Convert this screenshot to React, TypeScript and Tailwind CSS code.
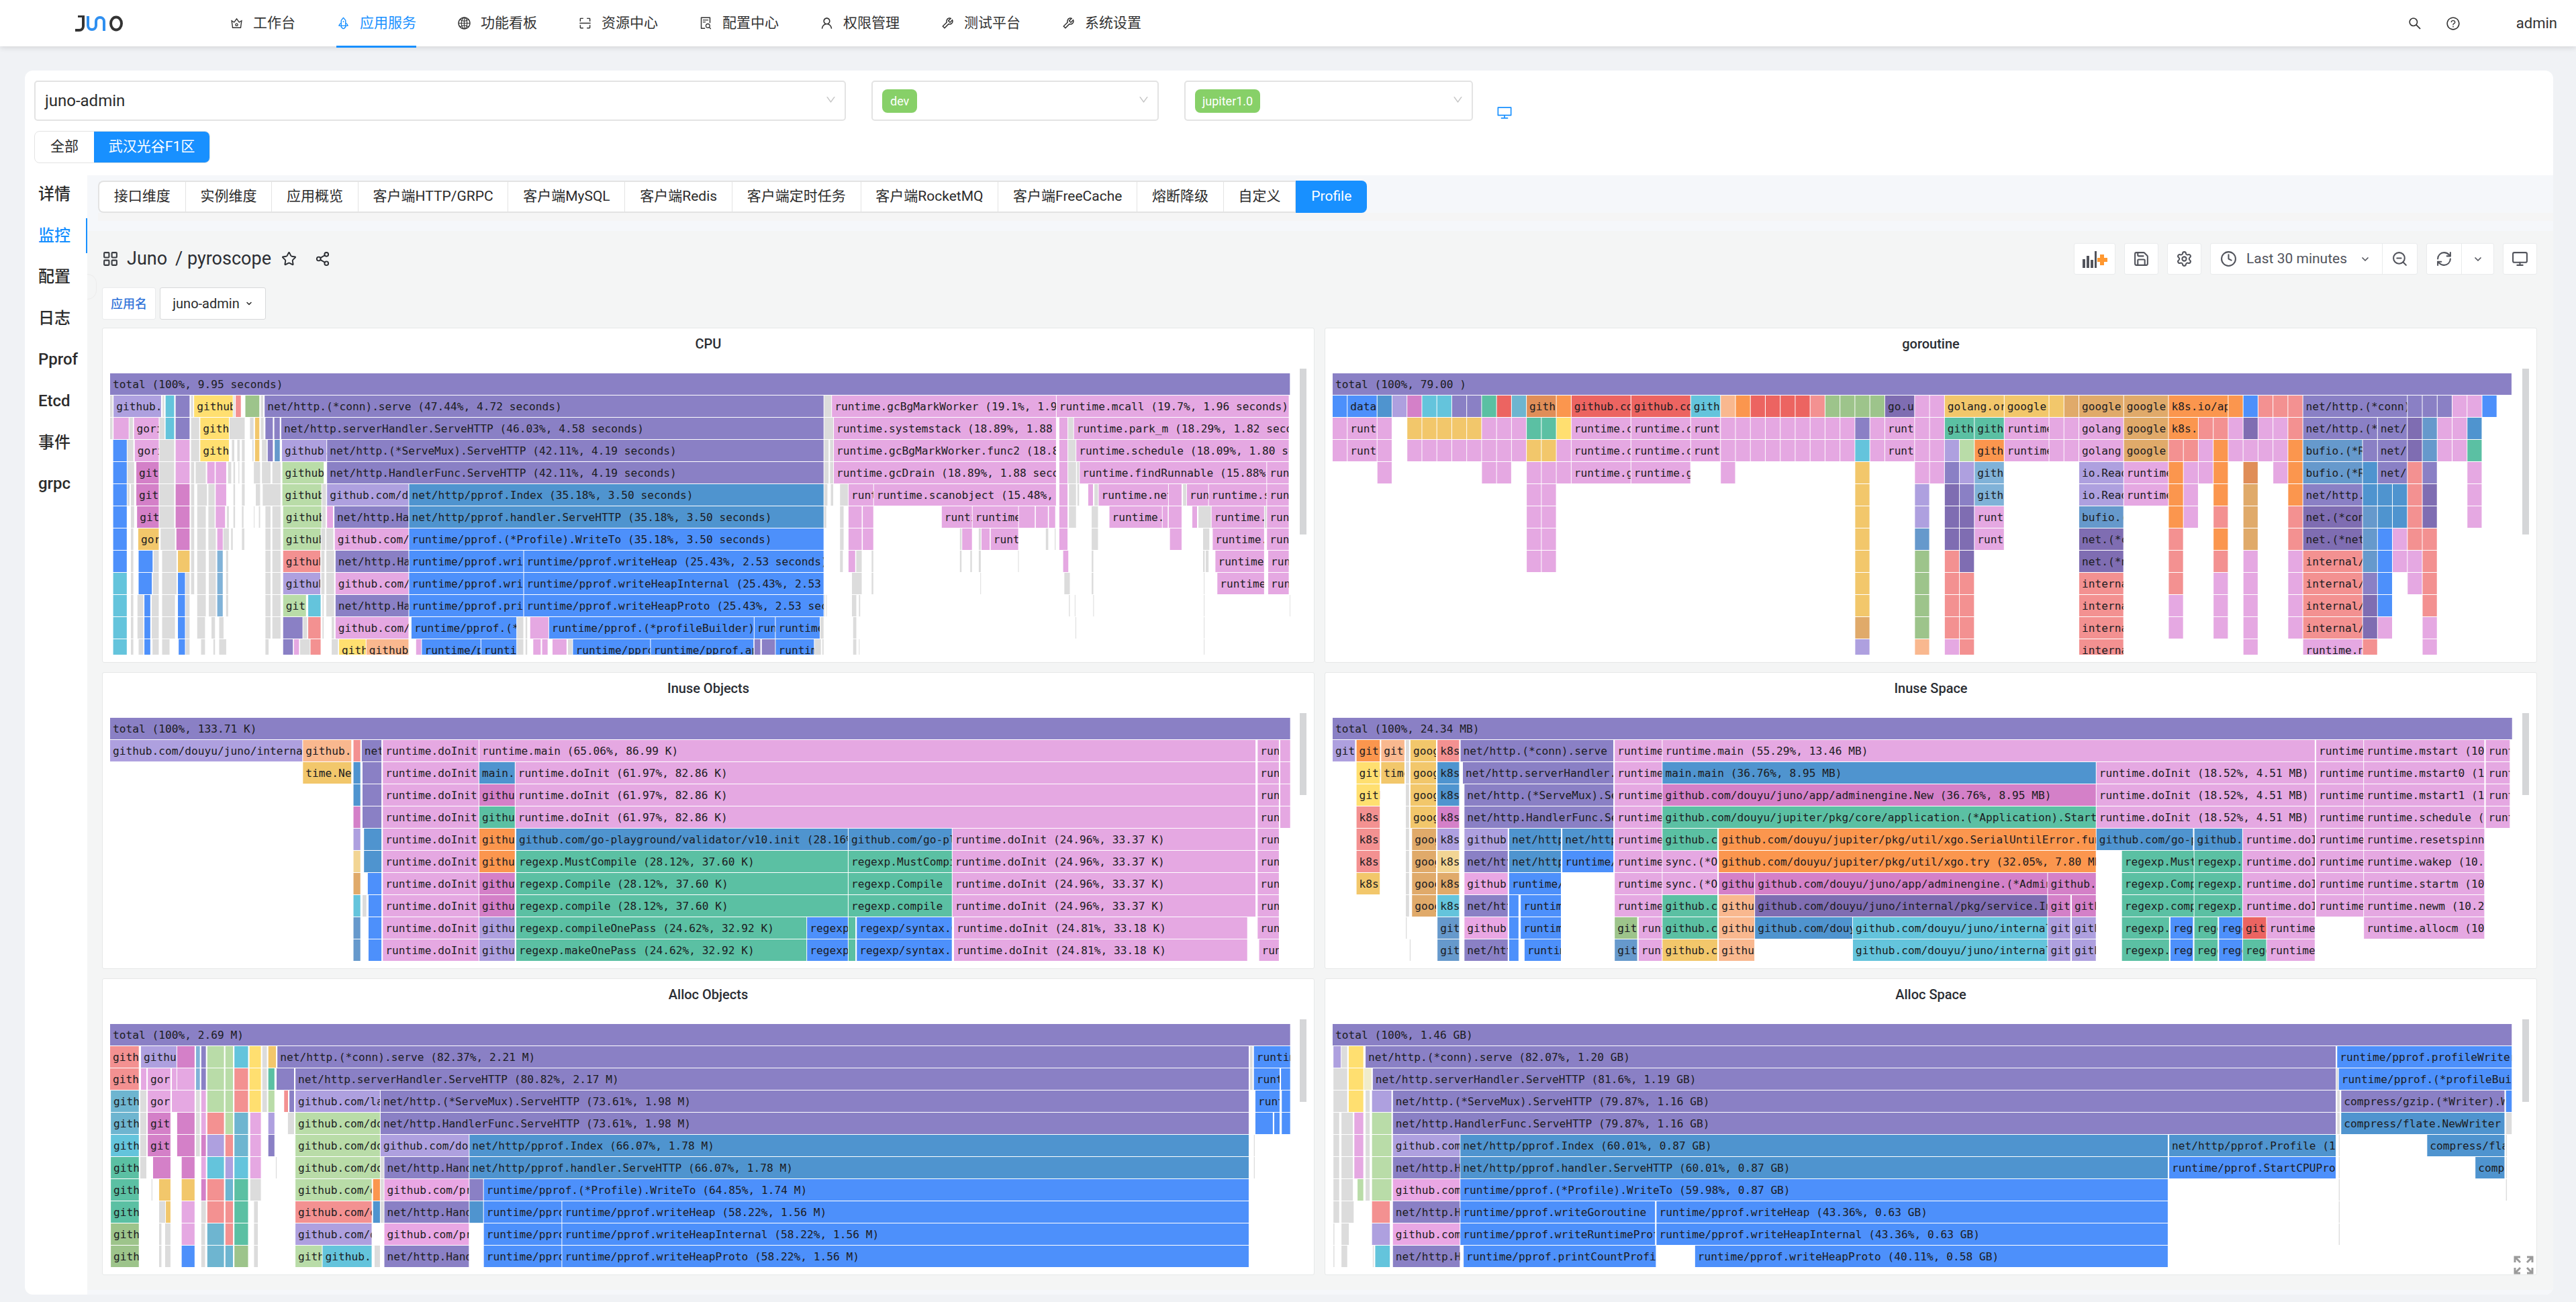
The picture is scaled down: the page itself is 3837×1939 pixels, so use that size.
import {
  AiOutlineCrown,
  AiOutlineDesktop,
  AiOutlineDown,
  AiOutlineFileSearch,
  AiOutlineGlobal,
  AiOutlineQuestionCircle,
  AiOutlineRocket,
  AiOutlineScan,
  AiOutlineSearch,
  AiOutlineTool,
  AiOutlineUser,
} from "react-icons/ai";
import { ChevronDown, Clock, LayoutGrid, Monitor, RefreshCw, Save, Settings, Share2, Star, ZoomOut } from "lucide-react";

const P = "#8a80c5";
const DP = "#7f6db2";
const L = "#aea0df";
const PK = "#e5a8e2";
const PK2 = "#e9a7e4";
const M = "#d480c8";
const B = "#4d90fb";
const S = "#4f94cf";
const S2 = "#6699cc";
const S3 = "#80b2d8";
const C = "#64c4dc";
const C2 = "#6eb5d0";
const T = "#5bc0a3";
const GN = "#9dc48b";
const LG = "#b9dca8";
const Y = "#ffdf70";
const A = "#f2c76b";
const A2 = "#f2d594";
const SD = "#e0aa6a";
const SO = "#e08e58";
const PE = "#f9b88f";
const O = "#fb964e";
const SA = "#f39191";
const R = "#ec6461";
const G = "#dcdcdc";

type Seg = [number, number, string, string?];

// grey slivers, given as start/end pairs
function gray(...xs: number[]): Seg[] {
  const out: Seg[] = [];
  for (let i = 0; i < xs.length; i += 2) out.push([xs[i], xs[i + 1], G]);
  return out;
}

const cpu: Seg[][] = [
  [[42, 3105, P, "total (100%, 9.95 seconds)"]],
  [...gray(42, 50, 178, 184, 252, 259, 362, 367, 433, 441, 1895, 1915), [51, 176, L, "github.com/gorilla"], [186, 210, C], [212, 250, P], [260, 362, Y, "github.com"], [368, 383, SA], [393, 431, GN], [443, 1895, P, "net/http.(*conn).serve (47.44%, 4.72 seconds)"], [1915, 2498, PK, "runtime.gcBgMarkWorker (19.1%, 1.90 seconds)"], [2498, 3102, PK, "runtime.mcall (19.7%, 1.96 seconds)"]],
  [...gray(42, 50, 92, 103, 170, 185, 252, 275, 352, 393, 405, 416, 433, 442, 1895, 1920, 2528, 2543), [51, 92, PK], [104, 170, PK, "gorilla"], [186, 210, C], [212, 250, P], [276, 352, Y, "github"], [418, 431, A], [445, 466, P], [468, 484, P], [486, 1895, P, "net/http.serverHandler.ServeHTTP (46.03%, 4.58 seconds)"], [1920, 2498, PK, "runtime.systemstack (18.89%, 1.88 seconds)"], [2505, 2528, PK], [2543, 3102, PK, "runtime.park_m (18.29%, 1.82 seconds)"]],
  [...gray(87, 104, 170, 210, 252, 275, 358, 366, 372, 380, 384, 393, 411, 416, 436, 450, 1895, 1908, 1910, 1920, 2528, 2549), [50, 87, B], [106, 170, PK, "gorilla"], [212, 250, PK], [276, 352, Y, "github"], [418, 431, A], [451, 466, P], [469, 484, S2], [488, 605, L, "github.com"], [605, 1895, P, "net/http.(*ServeMux).ServeHTTP (42.11%, 4.19 seconds)"], [1920, 2498, PK, "runtime.gcBgMarkWorker.func2 (18.89%, 1.88 seconds)"], [2505, 2528, PK], [2549, 3102, PK, "runtime.schedule (18.09%, 1.80 seconds)"]],
  [...gray(87, 106, 170, 210, 252, 262, 264, 292, 348, 358, 362, 368, 375, 379, 384, 393, 415, 433, 436, 460, 463, 486, 1895, 1908, 1910, 1920, 2528, 2550, 2551, 2558), [50, 87, B], [110, 170, M, "github"], [212, 250, PK], [294, 315, PK], [316, 345, PK], [489, 598, LG, "github.com"], [605, 1895, P, "net/http.HandlerFunc.ServeHTTP (42.11%, 4.19 seconds)"], [1920, 2498, PK, "runtime.gcDrain (18.89%, 1.88 seconds)"], [2505, 2528, PK], [2558, 3044, PK, "runtime.findRunnable (15.88%, 1.58 seconds)"], [3044, 3102, PK, "runtime"]],
  [...gray(87, 94, 96, 106, 170, 210, 252, 262, 268, 295, 297, 315, 362, 368, 384, 393, 420, 433, 438, 486, 592, 604, 1895, 1905, 1912, 1920, 1936, 1958, 2530, 2550, 2552, 2558, 2596, 2607, 2826, 2836), [50, 87, B], [110, 170, M, "github"], [212, 250, M], [316, 345, PK], [489, 592, LG, "github.com"], [605, 818, L, "github.com/douyu"], [818, 1895, S, "net/http/pprof.Index (35.18%, 3.50 seconds)"], [1958, 2024, PK, "runtime"], [2024, 2498, PK, "runtime.scanobject (15.48%, 1.54 seconds)"], [2505, 2528, PK], [2580, 2594, PK], [2607, 2789, PK, "runtime.netpoll"], [2789, 2824, PK], [2836, 2893, PK, "runtime"], [2893, 3044, PK, "runtime.stealWork"], [3044, 3102, PK, "runtime"]],
  [...gray(96, 106, 170, 210, 252, 262, 268, 292, 297, 315, 345, 352, 362, 368, 384, 390, 415, 418, 428, 433, 445, 460, 463, 486, 592, 603, 1895, 1902, 1936, 1947, 2530, 2550, 2589, 2607, 2866, 2900, 3038, 3044), [50, 87, B], [112, 170, M, "github"], [212, 250, M], [316, 342, PK], [491, 592, LG, "github.com"], [605, 622, PK], [624, 818, P, "net/http.HandlerFunc"], [818, 1895, S, "net/http/pprof.handler.ServeHTTP (35.18%, 3.50 seconds)"], [1958, 1994, PK], [1995, 2024, PK], [2200, 2280, PK, "runtime"], [2280, 2400, PK, "runtime.greyobject"], [2400, 2443, PK], [2444, 2477, PK], [2478, 2496, PK], [2505, 2528, PK], [2635, 2773, PK, "runtime.netpollblock"], [2773, 2788, PK], [2789, 2824, PK], [2850, 2864, PK], [2900, 3038, PK, "runtime.runqsteal"], [3044, 3102, PK, "runtime"]],
  [...gray(96, 104, 173, 212, 252, 262, 268, 292, 297, 318, 336, 352, 356, 362, 384, 392, 445, 460, 463, 486, 590, 602, 603, 623, 1936, 1947, 2247, 2253, 2296, 2303, 2470, 2478, 2493, 2497, 2589, 2607, 2878, 2896), [50, 87, B], [115, 170, A, "gorilla"], [214, 250, M], [320, 336, PK], [491, 590, LG, "github.com"], [625, 818, PK, "github.com/douyu"], [818, 1895, B, "runtime/pprof.(*Profile).WriteTo (35.18%, 3.50 seconds)"], [1958, 1994, PK], [1995, 2024, PK], [2253, 2280, PK], [2303, 2326, PK], [2327, 2400, PK, "runtime"], [2505, 2528, PK], [2792, 2824, PK], [2903, 3038, PK, "runtime.runqgrab"], [3044, 3102, PK, "runtime"]],
  [...gray(96, 104, 155, 170, 177, 216, 252, 262, 268, 292, 298, 318, 343, 350, 445, 460, 463, 486, 590, 600, 603, 625, 1936, 1945, 1978, 1994, 2018, 2024, 2247, 2253, 2274, 2280, 2296, 2303, 2398, 2400, 2589, 2595, 2878, 2884, 2885, 2894), [50, 87, B], [116, 154, B], [218, 250, A], [320, 336, S3], [491, 589, SA, "github.com"], [627, 818, P, "net/http.HandlerFunc"], [818, 1116, B, "runtime/pprof.writeGoroutine"], [1116, 1895, B, "runtime/pprof.writeHeap (25.43%, 2.53 seconds)"], [1958, 1977, PK], [2515, 2530, PK], [2910, 3038, PK, "runtime.procyield"], [3047, 3102, PK, "runtime"]],
  [...gray(96, 104, 153, 170, 177, 216, 238, 250, 252, 262, 268, 292, 298, 318, 343, 350, 445, 460, 463, 486, 590, 600, 603, 625, 1967, 1994, 2018, 2024, 2300, 2301, 2518, 2534, 2589, 2595, 2880, 2882), [50, 87, C], [116, 152, B], [218, 238, B], [320, 336, S3], [491, 589, L, "github.com"], [627, 818, PK, "github.com/douyu"], [818, 1116, B, "runtime/pprof.writeRuntimeProfile"], [1116, 1895, B, "runtime/pprof.writeHeapInternal (25.43%, 2.53 seconds)"], [2915, 3038, PK, "runtime.procyield"], [3047, 3102, PK, "runtime"]],
  [...gray(96, 104, 113, 130, 150, 170, 177, 212, 238, 250, 268, 292, 298, 318, 343, 350, 445, 460, 463, 486, 593, 598, 603, 625, 1895, 1898, 1900, 1903, 1967, 1980, 1985, 1990, 2530, 2534, 2545, 2548, 2593, 2595, 2880, 2882, 3103, 3105), [50, 87, C], [131, 148, B], [218, 238, B], [320, 336, S3], [491, 552, LG, "github"], [556, 590, C], [627, 818, P, "net/http.HandlerFunc"], [818, 1116, B, "runtime/pprof.printCountProfile"], [1116, 1895, B, "runtime/pprof.writeHeapProto (25.43%, 2.53 seconds)"]],
  [...gray(96, 104, 113, 130, 150, 170, 177, 212, 238, 250, 268, 290, 305, 316, 325, 338, 445, 460, 463, 486, 543, 555, 593, 598, 617, 625, 1098, 1116, 1120, 1126, 1885, 1895, 1970, 1980, 2547, 2549, 2880, 2882), [50, 87, C], [131, 148, B], [218, 238, B], [491, 543, P], [556, 590, SA], [627, 818, PK, "github.com/douyu"], [824, 1098, B, "runtime/pprof.(*profileBuilder)"], [1132, 1181, PK], [1181, 1714, B, "runtime/pprof.(*profileBuilder).addCPUData"], [1714, 1769, B, "runtime"], [1769, 1885, B, "runtime/pprof"]],
  [...gray(96, 104, 116, 130, 152, 170, 177, 198, 238, 250, 278, 290, 310, 316, 325, 345, 445, 455, 535, 562, 617, 635, 1098, 1116, 1120, 1126, 1230, 1243, 1870, 1888, 1890, 1895, 1970, 1980, 1985, 1988, 2880, 2882), [50, 87, C], [131, 148, B], [220, 238, B], [491, 518, P], [519, 534, PK], [562, 590, SA], [636, 707, Y, "github"], [707, 818, PE, "github.com"], [836, 851, PK], [851, 1005, B, "runtime/pprof"], [1005, 1098, B, "runtime/pp"], [1140, 1161, PK], [1163, 1179, PK], [1190, 1228, PK], [1243, 1445, B, "runtime/pprof.(*pro"], [1445, 1713, B, "runtime/pprof.appendLocs"], [1714, 1731, P], [1733, 1769, P], [1769, 1870, B, "runtime"]],
];

// goroutine stacks are whole counts: [first cell, cells, colour, label]
const goCells: [number, number, string, string?][][] = [
  [[0, 79, P, "total (100%, 79.00 )"]],
  [[0, 1, B], [1, 2, B, "database"], [3, 1, S], [4, 1, L], [5, 1, M], [6, 1, C], [7, 1, C], [8, 1, P], [9, 1, P], [10, 1, T], [11, 1, R], [12, 1, C2], [13, 2, SO, "github"], [15, 1, O], [16, 4, R, "github.com/douyu"], [20, 4, R, "github.com/douyu"], [24, 2, C, "github"], [26, 1, PE], [27, 1, O], [28, 1, R], [29, 1, R], [30, 1, R], [31, 1, R], [32, 1, SA], [33, 1, GN], [34, 1, GN], [35, 1, GN], [36, 1, GN], [37, 2, DP, "go.uber"], [39, 1, PK], [40, 1, PK], [41, 4, A, "golang.org/x"], [45, 3, A, "google.golang"], [48, 1, A], [49, 1, SD], [50, 3, SD, "google.golang"], [53, 3, SD, "google.golang"], [56, 4, O, "k8s.io/apimachinery"], [60, 1, O], [61, 1, B], [62, 1, SA], [63, 1, SA], [64, 1, SA], [65, 7, P, "net/http.(*conn).serve"], [72, 1, P], [73, 1, P], [74, 1, P], [75, 1, PK], [76, 1, PK], [77, 1, B]],
  [[0, 1, PK], [1, 2, PK, "runtime"], [3, 1, PK], [5, 1, A], [6, 1, A], [7, 1, A], [8, 1, A], [9, 1, A], [10, 1, PK], [11, 1, PK], [12, 1, PK], [13, 1, T], [14, 1, T], [15, 1, Y], [16, 4, PK, "runtime.chanrecv2"], [20, 4, PK, "runtime.chanrecv2"], [24, 2, PK, "runtime"], ...[26, 27, 28, 29, 30, 31, 32, 33, 34].map((i): [number, number, string] => [i, 1, PK]), [35, 1, P], [36, 1, PK], [37, 2, PK, "runtime"], [39, 1, PK], [40, 1, PK], [41, 2, T, "github"], [43, 2, T, "github"], [45, 3, PK, "runtime.gopark"], [48, 1, PK], [49, 1, PK], [50, 3, PK, "golang.org/x"], [53, 3, SD, "google.golang"], [56, 2, O, "k8s.io"], [58, 1, SA], [59, 1, SA], [60, 1, PK], [61, 1, DP], [62, 1, PK], [63, 1, PK], [64, 1, SA], [65, 5, P, "net/http.(*conn)"], [70, 2, P, "net/http"], [72, 1, DP], [73, 1, S2], [74, 1, PK], [75, 1, PK], [76, 1, S]],
  [[0, 1, PK], [1, 2, PK, "runtime"], [3, 1, PK], ...[5, 6, 7, 8, 9, 10, 11, 12].map((i): [number, number, string] => [i, 1, PK]), [13, 1, A], [14, 1, A], [15, 1, PK], [16, 4, PK, "runtime.chanrecv"], [20, 4, PK, "runtime.chanrecv"], [24, 2, PK, "runtime"], ...[26, 27, 28, 29, 30, 31, 32, 33, 34].map((i): [number, number, string] => [i, 1, PK]), [35, 1, C], [36, 1, PK], [37, 2, PK, "runtime"], [39, 1, PK], [40, 1, PK], [41, 1, L], [42, 1, LG], [43, 2, O, "github"], [45, 3, PK, "runtime.gopark"], [48, 1, PK], [49, 1, PK], [50, 3, PK, "golang.org/x"], [53, 3, SD, "google.golang"], [56, 1, SA], [57, 1, SA], [58, 1, PK], [59, 1, O], [60, 1, PK], [61, 1, PK], [62, 1, PK], [63, 1, PK], [64, 1, O], [65, 4, S2, "bufio.(*Reader)"], [69, 1, P], [70, 2, P, "net/http"], [72, 1, DP], [73, 1, S2], [74, 1, PK], [75, 1, PK], [76, 1, T]],
  [[3, 1, PK], [10, 1, PK], [11, 1, PK], [13, 1, PK], [14, 1, PK], [15, 1, PK], [16, 4, PK, "runtime.gopark"], [20, 4, PK, "runtime.gopark"], [26, 1, PK], [35, 1, A], [39, 1, PK], [40, 1, PK], [41, 1, P], [42, 1, L], [43, 2, S3, "github"], [50, 3, L, "io.ReadFull"], [53, 3, PK, "runtime.gopark"], [56, 1, O], [57, 1, PK], [58, 1, PK], [59, 1, O], [61, 1, SO], [63, 1, PK], [64, 1, O], [65, 4, S2, "bufio.(*Reader)"], [69, 1, S], [70, 2, P, "net/http"], [72, 1, SA], [73, 1, P], [76, 1, PK]],
  [[13, 1, PK], [14, 1, PK], [35, 1, A], [39, 1, L], [41, 1, DP], [42, 1, P], [43, 2, S3, "github"], [50, 3, L, "io.ReadFull"], [53, 3, PK, "runtime.gopark"], [56, 1, O], [57, 1, PK], [59, 1, O], [61, 1, SD], [64, 1, O], [65, 4, P, "net/http.(*conn)"], [69, 1, S], [70, 1, S], [71, 1, S], [72, 1, SA], [73, 1, DP], [76, 1, PK]],
  [[13, 1, PK], [14, 1, PK], [35, 1, A], [39, 1, L], [41, 1, DP], [42, 1, DP], [43, 2, PK, "runtime"], [50, 3, S2, "bufio.(*Reader)"], [56, 1, O], [57, 1, PK], [59, 1, SA], [61, 1, SD], [64, 1, SA], [65, 4, DP, "net.(*conn).Read"], [69, 1, S2], [70, 1, S], [71, 1, S], [72, 1, SA], [73, 1, DP], [76, 1, PK]],
  [[13, 1, PK], [14, 1, PK], [35, 1, A], [39, 1, S2], [41, 1, DP], [42, 1, DP], [43, 2, PK, "runtime"], [50, 3, DP, "net.(*conn)"], [56, 1, SA], [59, 1, O], [61, 1, SD], [64, 1, SA], [65, 4, DP, "net.(*netFD).Read"], [69, 1, S2], [70, 1, B], [71, 1, PK], [72, 1, SA], [73, 1, SA]],
  [[13, 1, PK], [14, 1, PK], [35, 1, A], [39, 1, GN], [41, 1, SA], [42, 1, DP], [50, 3, DP, "net.(*netFD)"], [56, 1, SA], [59, 1, SA], [61, 1, PK], [64, 1, PK], [65, 4, SA, "internal/poll"], [69, 1, S2], [70, 1, B], [71, 1, PK], [72, 1, PK], [73, 1, SA]],
  [[35, 1, A], [39, 1, GN], [41, 1, SA], [42, 1, SA], [50, 3, SA, "internal/poll"], [56, 1, SA], [59, 1, PK], [61, 1, PK], [64, 1, PK], [65, 4, SA, "internal/poll"], [69, 1, P], [70, 1, B], [72, 1, PK], [73, 1, SA]],
  [[35, 1, A], [39, 1, GN], [41, 1, SA], [42, 1, SA], [50, 3, SA, "internal/poll"], [56, 1, PK], [59, 1, PK], [61, 1, PK], [64, 1, PK], [65, 4, SA, "internal/poll"], [69, 1, DP], [70, 1, B], [73, 1, SA]],
  [[35, 1, SD], [39, 1, GN], [41, 1, SA], [42, 1, SA], [50, 3, SA, "internal/poll"], [56, 1, PK], [59, 1, PK], [61, 1, PK], [64, 1, PK], [65, 4, SA, "internal/poll"], [69, 1, DP], [70, 1, PK], [73, 1, PK]],
  [[35, 1, L], [39, 1, PE], [41, 1, PK], [42, 1, SA], [50, 3, SA, "internal/poll"], [61, 1, PK], [65, 4, PK, "runtime.netpollblock"], [69, 1, SA], [73, 1, PK]],
];
const goroutine: Seg[][] = goCells.map((row) => row.map(([i, n, c, t]): Seg => [i, i + n, c, t]));

const DOINIT = "runtime.doInit";
const initTail = (label: string): Seg[] => [[383, 511, PK, DOINIT], [1139, 1542, PK, label]];
const runEdge: Seg[] = [[1544, 1573, PK, "runtime"], [1574, 1588, PK]];
const runOnly: Seg[] = [[1544, 1573, PK, "runtime"]];

const inuseObjects: Seg[][] = [
  [[21, 1588, P, "total (100%, 133.71 K)"]],
  [[21, 277, L, "github.com/douyu/juno/internal/pkg"], [277, 342, PE, "github.com"], [344, 354, SA], [355, 382, P, "net/http"], [383, 511, PK, DOINIT], [511, 1542, PK, "runtime.main (65.06%, 86.99 K)"], ...runEdge],
  [[277, 342, A, "time.NewTimer"], [344, 354, S], [356, 382, P], [383, 511, PK, DOINIT], [511, 559, S, "main.main"], [559, 1542, PK, "runtime.doInit (61.97%, 82.86 K)"], ...runEdge],
  [[344, 354, S], [356, 382, P], [383, 511, PK, DOINIT], [511, 559, M, "github.com"], [559, 1542, PK, "runtime.doInit (61.97%, 82.86 K)"], ...runEdge],
  [[344, 354, M], [356, 382, P], [383, 511, PK, DOINIT], [511, 559, T, "github.com"], [559, 1542, PK, "runtime.doInit (61.97%, 82.86 K)"], ...runEdge],
  [[344, 354, L], [358, 382, S], ...initTail("runtime.doInit (24.96%, 33.37 K)"), [511, 559, O, "github.com"], [560, 1001, S, "github.com/go-playground/validator/v10.init (28.16%, 37.65 K)"], [1001, 1139, S, "github.com/go-playground"], ...runOnly],
  [[344, 354, A2], [358, 382, S], ...initTail("runtime.doInit (24.96%, 33.37 K)"), [511, 559, O, "github.com"], [560, 1001, T, "regexp.MustCompile (28.12%, 37.60 K)"], [1001, 1139, T, "regexp.MustCompile (3"], ...runOnly],
  [[344, 354, SD], [363, 382, B], ...initTail("runtime.doInit (24.96%, 33.37 K)"), [511, 559, M, "github.com"], [560, 1001, T, "regexp.Compile (28.12%, 37.60 K)"], [1001, 1139, T, "regexp.Compile"], ...runOnly],
  [[344, 354, C], [356, 362, G], [364, 382, B], ...initTail("runtime.doInit (24.96%, 33.37 K)"), [511, 559, M, "github.com"], [560, 1001, T, "regexp.compile (28.12%, 37.60 K)"], [1001, 1139, T, "regexp.compile"], ...runOnly],
  [[344, 354, S2], [364, 382, B], [383, 511, PK, DOINIT], [511, 559, L, "github.com"], [560, 946, T, "regexp.compileOnePass (24.62%, 32.92 K)"], [946, 1001, B, "regexp/syntax"], [1001, 1011, T], [1012, 1139, B, "regexp/syntax.Compile"], [1141, 1531, PK, "runtime.doInit (24.81%, 33.18 K)"], ...runOnly],
  [[344, 354, S2], [364, 382, B], [383, 511, PK, DOINIT], [511, 559, L, "github.com"], [560, 946, T, "regexp.makeOnePass (24.62%, 32.92 K)"], [946, 1001, B, "regexp/syntax"], [1001, 1011, T], [1012, 1139, B, "regexp/syntax.Parse"], [1141, 1531, PK, "runtime.doInit (24.81%, 33.18 K)"], [1546, 1573, PK, "runtime"]],
];

const RT: Seg = [388, 450, PK, "runtime.main"];
const RT2: Seg = [1298, 1360, PK, "runtime.mcall"];
const DOI: Seg = [1203, 1297, PK, "runtime.doInit"];
const inuseSpace: Seg[][] = [
  [[22, 1553, P, "total (100%, 24.34 MB)"]],
  [[22, 52, L, "github"], [53, 84, O, "github"], [85, 116, PE, "github"], [117, 122, G], [123, 157, A, "google"], [158, 187, SA, "k8s.io"], [188, 387, P, "net/http.(*conn).serve (32%)"], RT, [450, 1297, PK, "runtime.main (55.29%, 13.46 MB)"], RT2, [1360, 1517, PK, "runtime.mstart (10.25%, 2.50 MB)"], [1518, 1550, PK, "runtime"]],
  [[53, 84, Y, "github"], [85, 116, A, "time.Now"], [117, 122, G], [123, 157, A, "google"], [158, 187, S, "k8s.io"], [191, 387, P, "net/http.serverHandler.ServeHTTP"], RT, [450, 1013, S, "main.main (36.76%, 8.95 MB)"], [1013, 1297, PK, "runtime.doInit (18.52%, 4.51 MB)"], RT2, [1360, 1517, PK, "runtime.mstart0 (10.25%, 2.50 MB)"], [1518, 1550, PK, "runtime"]],
  [[53, 84, Y, "github"], [117, 122, G], [123, 157, A, "google"], [158, 187, S, "k8s.io"], [193, 387, P, "net/http.(*ServeMux).ServeHTTP"], RT, [450, 1013, M, "github.com/douyu/juno/app/adminengine.New (36.76%, 8.95 MB)"], [1013, 1297, PK, "runtime.doInit (18.52%, 4.51 MB)"], RT2, [1360, 1517, PK, "runtime.mstart1 (10.25%, 2.50 MB)"], [1518, 1550, PK, "runtime"]],
  [[53, 84, SA, "k8s.io"], [117, 122, G], [123, 157, A, "google"], [158, 187, M, "k8s.io"], [193, 387, P, "net/http.HandlerFunc.ServeHTTP"], RT, [450, 1013, T, "github.com/douyu/jupiter/pkg/core/application.(*Application).Start"], [1013, 1297, PK, "runtime.doInit (18.52%, 4.51 MB)"], RT2, [1360, 1517, PK, "runtime.schedule (10.25%, 2.50 MB)"], [1518, 1550, PK, "runtime"]],
  [[53, 84, SA, "k8s.io"], [117, 122, G], [125, 157, SD, "google"], [158, 187, L, "k8s.io"], [193, 250, L, "github.com"], [251, 319, S, "net/http.H"], [320, 387, S, "net/http.H"], RT, [450, 522, T, "github.com"], [523, 1013, O, "github.com/douyu/jupiter/pkg/util/xgo.SerialUntilError.func1"], [1013, 1139, S, "github.com/go-playground"], [1140, 1203, S, "github.com"], DOI, RT2, [1360, 1517, PK, "runtime.resetspinning (10.25%)"]],
  [[53, 84, SA, "k8s.io"], [117, 122, G], [125, 157, SD, "google"], [158, 187, A2, "k8s.io"], [193, 250, P, "net/http"], [251, 319, S, "net/http.H"], [320, 387, B, "runtime/pprof"], RT, [450, 522, PK, "sync.(*Once)"], [523, 1013, O, "github.com/douyu/jupiter/pkg/util/xgo.try (32.05%, 7.80 MB)"], [1046, 1140, T, "regexp.MustCompile"], [1140, 1203, T, "regexp.Must"], DOI, RT2, [1360, 1517, PK, "runtime.wakep (10.25%, 2.50 MB)"]],
  [[53, 84, A, "k8s.io"], [117, 122, G], [125, 157, SD, "google"], [158, 187, SD, "k8s.io"], [193, 250, PK2, "github.com"], [251, 319, B, "runtime/pprof"], RT, [450, 522, PK, "sync.(*Once)"], [523, 570, M, "github.com"], [570, 950, M, "github.com/douyu/juno/app/adminengine.(*Admin).initX"], [950, 1013, M, "github.com"], [1046, 1140, T, "regexp.Compile"], [1140, 1203, T, "regexp.Comp"], DOI, RT2, [1360, 1517, PK, "runtime.startm (10.25%, 2.50 MB)"]],
  [[117, 122, G], [125, 157, SD, "google"], [158, 187, C, "k8s.io"], [193, 250, P, "net/http"], [251, 264, B], [266, 319, B, "runtime/pprof"], RT, [450, 522, T, "github.com"], [523, 570, PE, "github.com"], [570, 950, DP, "github.com/douyu/juno/internal/pkg/service.Init"], [950, 980, M, "github"], [981, 1013, M, "github"], [1046, 1140, T, "regexp.compile"], [1140, 1203, T, "regexp.comp"], DOI, RT2, [1360, 1517, PK, "runtime.newm (10.25%, 2.50 MB)"]],
  [[117, 119, G], [158, 187, S2, "github"], [193, 250, PK2, "github.com"], [251, 264, B], [266, 319, B, "runtime/pprof"], [388, 418, GN, "github"], [419, 450, PK, "runtime"], [450, 522, T, "github.com"], [523, 570, PE, "github.com"], [570, 697, S, "github.com/douyu/juno"], [697, 950, C, "github.com/douyu/juno/internal/pkg"], [950, 980, L, "github"], [981, 1013, L, "github"], [1046, 1108, T, "regexp.comp"], [1109, 1139, B, "regexp"], [1140, 1171, T, "regexp"], [1172, 1203, B, "regexp"], [1203, 1234, R, "github"], [1234, 1297, PK, "runtime.new"], [1360, 1517, PK, "runtime.allocm (10.25%, 2.50 MB)"]],
  [[122, 124, G], [158, 187, S2, "github"], [193, 250, P, "net/http"], [251, 264, B], [271, 319, B, "runtime/pprof"], [388, 418, S2, "github"], [419, 450, PK, "runtime"], [450, 522, A, "github.com"], [523, 570, PE, "github.com"], [697, 950, C, "github.com/douyu/juno/internal/pkg"], [950, 980, L, "github"], [981, 1013, L, "github"], [1046, 1108, T, "regexp.make"], [1109, 1139, B, "regexp"], [1140, 1171, T, "regexp"], [1172, 1203, B, "regexp"], [1203, 1234, T, "regexp"], [1234, 1297, PK, "runtime.mal"]],
];

const allocObjects: Seg[][] = [
  [[21, 1588, P, "total (100%, 2.69 M)"]],
  [[21, 60, SA, "github"], [62, 110, L, "github.com"], [110, 134, M], [135, 141, S3], [142, 149, P], [150, 173, LG], [174, 185, LG], [186, 205, C], [206, 222, Y], [223, 230, G], [231, 242, A], [243, 1533, P, "net/http.(*conn).serve (82.37%, 2.21 M)"], [1534, 1538, G], [1539, 1588, B, "runtime/pprof"]],
  [[21, 60, SA, "github"], [62, 70, PK], [71, 102, PK, "gorilla"], [103, 110, PK], [110, 134, PK], [135, 141, S3], [142, 149, P], [150, 173, LG], [174, 185, LG], [186, 205, SA], [206, 222, Y], [223, 230, G], [231, 240, T], [242, 266, P], [267, 1533, P, "net/http.serverHandler.ServeHTTP (80.82%, 2.17 M)"], [1534, 1538, G], [1539, 1574, B, "runtime/pprof"], [1575, 1588, B]],
  [[22, 60, C2, "github"], [61, 70, G], [71, 102, PK, "gorilla"], [103, 134, PK], [135, 141, G], [142, 149, PK], [150, 173, LG], [174, 185, LG], [186, 205, SA], [206, 222, Y], [223, 230, G], [231, 240, LG], [252, 258, SA], [259, 266, P], [267, 380, L, "github.com/labstack"], [380, 1533, P, "net/http.(*ServeMux).ServeHTTP (73.61%, 1.98 M)"], [1541, 1574, B, "runtime/pprof"], [1576, 1588, B]],
  [[22, 60, C2, "github"], [61, 70, G], [71, 102, M, "github"], [110, 134, M], [135, 141, G], [142, 149, PK], [150, 173, SA], [174, 185, LG], [186, 205, C2], [207, 222, PK], [231, 240, L], [257, 266, G], [267, 380, LG, "github.com/douyu"], [380, 1533, P, "net/http.HandlerFunc.ServeHTTP (73.61%, 1.98 M)"], [1541, 1565, B], [1566, 1574, B], [1576, 1588, B]],
  [[22, 60, C, "github"], [61, 70, G], [71, 102, M, "github"], [110, 134, M], [135, 141, G], [142, 149, M], [150, 173, L], [174, 185, SA], [186, 205, C2], [207, 222, PK], [231, 240, P], [267, 380, LG, "github.com/douyu"], [380, 498, L, "github.com/douyu"], [498, 1533, S, "net/http/pprof.Index (66.07%, 1.78 M)"], [1539, 1541, G]],
  [[22, 60, T, "github"], [61, 70, G], [78, 102, M], [116, 134, M], [142, 149, PK], [150, 173, C], [174, 185, L], [186, 205, C], [207, 222, PK], [241, 243, G], [267, 380, LG, "github.com/douyu"], [380, 385, G], [385, 498, P, "net/http.HandlerFunc"], [498, 1533, S, "net/http/pprof.handler.ServeHTTP (66.07%, 1.78 M)"], [1539, 1541, G]],
  [[22, 60, T, "github"], [76, 78, G], [86, 102, A], [116, 134, A], [142, 149, M], [150, 173, SA], [174, 185, C2], [186, 205, T], [207, 222, G], [267, 369, LG, "github.com/douyu"], [370, 380, O], [380, 385, G], [385, 498, PK2, "github.com/prometheus"], [498, 517, P], [517, 1533, B, "runtime/pprof.(*Profile).WriteTo (64.85%, 1.74 M)"]],
  [[22, 60, T, "github"], [86, 95, G], [95, 102, A], [116, 134, PK], [142, 149, G], [150, 173, SA], [174, 185, SA], [186, 205, T], [212, 218, G], [267, 369, SA, "github.com/douyu"], [370, 380, S], [380, 385, G], [385, 498, P, "net/http.HandlerFunc"], [498, 517, S], [517, 621, B, "runtime/pprof.write"], [621, 1533, B, "runtime/pprof.writeHeap (58.22%, 1.56 M)"]],
  [[22, 60, GN, "github"], [86, 90, G], [94, 102, G], [116, 134, PK], [142, 148, G], [150, 173, C2], [174, 185, SA], [186, 205, T], [212, 218, G], [267, 369, L, "github.com/douyu"], [385, 498, PK2, "github.com/prometheus"], [517, 621, B, "runtime/pprof.write"], [621, 1533, B, "runtime/pprof.writeHeapInternal (58.22%, 1.56 M)"]],
  [[22, 60, GN, "github"], [86, 90, G], [94, 102, G], [116, 134, B], [142, 148, G], [150, 173, C2], [174, 185, C2], [186, 205, GN], [212, 218, G], [267, 303, LG, "github"], [303, 369, C, "github.com"], [372, 380, G], [385, 498, P, "net/http.HandlerFunc"], [517, 621, B, "runtime/pprof.print"], [621, 1533, B, "runtime/pprof.writeHeapProto (58.22%, 1.56 M)"]],
];

const allocSpace: Seg[][] = [
  [[21, 1489, P, "total (100%, 1.46 GB)"]],
  [[22, 32, L], [32, 40, G], [41, 60, Y], [62, 1270, P, "net/http.(*conn).serve (82.07%, 1.20 GB)"], [1271, 1489, B, "runtime/pprof.profileWriter (17%)"]],
  [[22, 40, G], [41, 60, Y], [60, 70, "#f0eccb"], [71, 1270, P, "net/http.serverHandler.ServeHTTP (81.6%, 1.19 GB)"], [1270, 1273, G], [1273, 1489, B, "runtime/pprof.(*profileBuilder).build"]],
  [[22, 40, G], [41, 60, Y], [62, 68, G], [70, 95, L], [96, 1270, P, "net/http.(*ServeMux).ServeHTTP (79.87%, 1.16 GB)"], [1271, 1275, G], [1276, 1480, P, "compress/gzip.(*Writer).Write"], [1481, 1489, B]],
  [[22, 30, G], [32, 47, G], [48, 60, PK], [62, 68, G], [70, 95, LG], [96, 1270, P, "net/http.HandlerFunc.ServeHTTP (79.87%, 1.16 GB)"], [1271, 1275, G], [1276, 1480, S, "compress/flate.NewWriter (14%)"], [1481, 1489, G]],
  [[22, 30, G], [32, 47, G], [48, 60, PK], [62, 68, G], [70, 95, LG], [96, 180, L, "github.com/douyu"], [180, 1061, S, "net/http/pprof.Index (60.01%, 0.87 GB)"], [1062, 1270, S, "net/http/pprof.Profile (19.86%, 0.29 GB)"], [1273, 1275, G], [1383, 1480, S, "compress/flate.(*c"], [1481, 1483, G]],
  [[22, 30, G], [32, 47, G], [48, 60, PK], [62, 68, G], [70, 95, LG], [96, 180, P, "net/http.HandlerFunc"], [180, 1061, S, "net/http/pprof.handler.ServeHTTP (60.01%, 0.87 GB)"], [1062, 1270, B, "runtime/pprof.StartCPUProfile"], [1273, 1275, G], [1443, 1480, S, "compress"], [1481, 1483, G]],
  [[22, 30, G], [32, 47, G], [52, 60, LG], [62, 68, G], [70, 95, LG], [96, 180, PK2, "github.com/douyu"], [180, 1061, B, "runtime/pprof.(*Profile).WriteTo (59.98%, 0.87 GB)"], [1273, 1275, G], [1481, 1483, G]],
  [[22, 30, G], [32, 48, G], [70, 93, SA], [96, 180, P, "net/http.HandlerFunc"], [180, 423, B, "runtime/pprof.writeGoroutine"], [424, 1061, B, "runtime/pprof.writeHeap (43.36%, 0.63 GB)"], [1273, 1275, G]],
  [[22, 24, G], [32, 42, G], [70, 93, L], [96, 180, PK2, "github.com/douyu"], [180, 423, B, "runtime/pprof.writeRuntimeProfile"], [424, 1061, B, "runtime/pprof.writeHeapInternal (43.36%, 0.63 GB)"], [1273, 1275, G]],
  [[22, 24, G], [32, 40, G], [71, 73, G], [74, 93, C], [96, 180, P, "net/http.HandlerFunc"], [184, 424, B, "runtime/pprof.printCountProfile"], [472, 1061, B, "runtime/pprof.writeHeapProto (40.11%, 0.58 GB)"]],
];

function Flame({ rows, origin, scale, height }: { rows: Seg[][]; origin: number; scale: number; height: number }) {
  return (
    <svg width={1758} height={height} className="block ml-[11px] [font-family:'DejaVu_Sans_Mono',monospace] text-[16.2px]">
      {rows.map((row, r) =>
        row.map(([a, b, color, label], i) => {
          const x = (a - origin) / scale;
          const w = Math.max((b - a) / scale - 1, 1);
          return (
            <g key={`${r}-${i}`}>
              <rect x={x} y={r * 33} width={w} height={32} fill={color} />
              {label && (
                <svg x={x} y={r * 33} width={w} height={32}>
                  <text x={4} y={22} fill="#1c1c22">
                    {label}
                  </text>
                </svg>
              )}
            </g>
          );
        })
      )}
    </svg>
  );
}

function Panel({ title, children, thumb, className }: { title: string; children: React.ReactNode; thumb: number; className: string }) {
  return (
    <div className={`relative rounded-[3px] border border-[#e6e8e8] bg-white ${className}`}>
      <div className="h-[47px] text-center text-[20px] leading-[47px] font-medium text-[#2a2d33]">{title}</div>
      <div className="mt-[20px]">{children}</div>
      <div className="absolute left-[1783px] top-[60px] w-[10px] bg-[#d5d6d8]" style={{ height: thumb }} />
    </div>
  );
}

function ToolBtn({ children, className = "w-[51px]" }: { children: React.ReactNode; className?: string }) {
  return (
    <div className={`flex h-[47px] items-center justify-center rounded-[3px] border border-[#e9ebec] bg-white text-[#52545c] ${className}`}>
      {children}
    </div>
  );
}

const navItems = [
  { icon: AiOutlineCrown, label: "工作台" },
  { icon: AiOutlineRocket, label: "应用服务", active: true },
  { icon: AiOutlineGlobal, label: "功能看板" },
  { icon: AiOutlineScan, label: "资源中心" },
  { icon: AiOutlineFileSearch, label: "配置中心" },
  { icon: AiOutlineUser, label: "权限管理" },
  { icon: AiOutlineTool, label: "测试平台" },
  { icon: AiOutlineTool, label: "系统设置" },
];

const tabs = ["接口维度", "实例维度", "应用概览", "客户端HTTP/GRPC", "客户端MySQL", "客户端Redis", "客户端定时任务", "客户端RocketMQ", "客户端FreeCache", "熔断降级", "自定义"];
const sideItems = ["详情", "监控", "配置", "日志", "Pprof", "Etcd", "事件", "grpc"];

function Select({ className, children }: { className: string; children: React.ReactNode }) {
  return (
    <div className={`relative flex h-[60px] items-center rounded-[5px] border-2 border-[#e3e3e3] px-[14px] ${className}`}>
      {children}
      <AiOutlineDown className="absolute right-[12px] top-[18px] text-[17px] text-[#c4c4c4]" />
    </div>
  );
}

export default function App() {
  return (
    <div className="min-h-[1939px] w-[3837px] bg-[#f0f2f5] [font-family:Roboto,'Noto_Sans_CJK_SC',sans-serif] text-[#2b2b2b]">
      <header className="relative flex h-[69px] items-center bg-white pl-[110px] shadow-[0_2px_8px_rgba(0,0,0,0.12)]">
        <svg width="76" height="24" viewBox="0 0 76 24" fill="none" className="mr-[156px]">
          <path d="M6 1h8v15a6 6 0 0 1-6 6H2" stroke="#333" strokeWidth="4" />
          <path d="M21 1v14a6 6 0 0 0 12 0V9a6 6 0 0 1 12 0v14" stroke="#2f8ff0" strokeWidth="4" />
          <ellipse cx="63" cy="12" rx="8" ry="9.5" stroke="#333" strokeWidth="4" />
        </svg>
        <nav className="flex h-full gap-[61px]">
          {navItems.map((n) => (
            <div
              key={n.label}
              className={`relative flex h-full items-center gap-[14px] text-[21px] ${n.active ? "text-[#1890ff]" : "text-[#333]"}`}
            >
              <n.icon className="text-[21px]" />
              {n.label}
              {n.active && <span className="absolute bottom-[-2px] left-0 h-[3px] w-full bg-[#1890ff]" />}
            </div>
          ))}
        </nav>
        <div className="ml-auto flex items-center pr-[28px] text-[#333]">
          <AiOutlineSearch className="mr-[35px] text-[22px]" />
          <AiOutlineQuestionCircle className="mr-[83px] text-[22px]" />
          <span className="text-[22px]">admin</span>
        </div>
      </header>

      <main className="ml-[37px] mr-[34px] mt-[36px] flex h-[1823px] flex-col overflow-hidden rounded-[12px] bg-white">
        <div className="flex gap-[38px] px-[14px] pt-[15px]">
          <Select className="w-[1209px] text-[24px]">juno-admin</Select>
          <Select className="w-[428px]">
            <span className="rounded-[8px] bg-[#87d068] px-[12px] py-[4px] text-[18px] text-white">dev</span>
          </Select>
          <Select className="w-[430px]">
            <span className="rounded-[8px] bg-[#87d068] px-[11px] py-[4px] text-[18px] text-white">jupiter1.0</span>
          </Select>
          <AiOutlineDesktop className="-ml-[3px] mt-[36px] text-[24px] text-[#1890ff]" />
        </div>
        <div className="mx-[14px] mt-[15px] flex h-[48px] w-[262px] overflow-hidden rounded-[8px] border border-[#e3e3e3] text-[21px]">
          <div className="flex w-[88px] items-center justify-center">全部</div>
          <div className="flex flex-1 items-center justify-center bg-[#1890ff] text-white">武汉光谷F1区</div>
        </div>

        <div className="mt-[18px] flex min-h-0 flex-1">
          <aside className="relative w-[93px] shrink-0 pt-[2px]">
            {sideItems.map((s) => (
              <div
                key={s}
                className={`mb-[9.6px] flex h-[52px] items-center pl-[20px] text-[24px] font-medium ${s === "监控" ? "border-r-2 border-[#1890ff] text-[#1890ff]" : ""}`}
              >
                {s}
              </div>
            ))}
            <div className="absolute right-[-14px] top-[147px] h-[38px] w-[14px] rounded-r-full border border-l-0 border-[#ececec]" />
          </aside>

          <section className="flex min-w-0 flex-1 flex-col bg-[#f5f7fa] pt-[8px]">
            <div className="ml-[16px] flex h-[48px] items-stretch text-[21px]">
              <div className="flex overflow-hidden rounded-l-[8px] border-2 border-r-0 border-[#e3e3e3] bg-white">
                {tabs.map((t) => (
                  <div key={t} className="flex items-center border-r border-[#e3e3e3] px-[21.8px] whitespace-nowrap">
                    {t}
                  </div>
                ))}
              </div>
              <div className="flex w-[106px] items-center justify-center rounded-r-[8px] bg-[#1890ff] text-white">Profile</div>
            </div>
            <div className="ml-[16px] h-[12px] shrink-0 bg-[#f5f5f5]" />
            <div className="mt-[15px] flex-1 bg-[#f4f5f5] pl-[22px] pr-[24px] pt-[18px]">
              <div className="flex h-[47px] items-center">
                <LayoutGrid size={25} strokeWidth={2} className="text-[#3a3d42]" />
                <span className="ml-[12px] text-[27px] text-[#2b2e33]">Juno</span>
                <span className="ml-[12px] text-[27px] text-[#2b2e33]">/ pyroscope</span>
                <Star size={23} className="ml-[15px] text-[#2b2e33]" />
                <Share2 size={23} className="ml-[27px] text-[#2b2e33]" />
                <div className="ml-auto flex items-center gap-[13px]">
                  <ToolBtn className="w-[62px]">
                    <svg width="38" height="26" viewBox="0 0 38 26">
                      <path d="M1 13h4v13H1zM7 8h4v18H7zM13 14h4v12h-4zM19 1h3v25h-3z" fill="#52545c" />
                      <path d="M27 6h6v5h5v6h-5v5h-6v-5h-4v-6h4z" fill="#ff9830" />
                    </svg>
                  </ToolBtn>
                  <ToolBtn><Save size={25} /></ToolBtn>
                  <ToolBtn><Settings size={25} /></ToolBtn>
                  <div className="flex h-[47px] w-[309px] items-center rounded-[3px] border border-[#e9ebec] bg-white text-[#52545c]">
                    <Clock size={25} className="ml-[14px]" />
                    <span className="ml-[14px] text-[21px]">Last 30 minutes</span>
                    <ChevronDown size={16} strokeWidth={2.5} className="ml-[19px]" />
                    <span className="ml-auto flex h-full w-[52px] items-center justify-center border-l border-[#e9ebec]">
                      <ZoomOut size={25} />
                    </span>
                  </div>
                  <div className="flex h-[47px] w-[101px] items-center rounded-[3px] border border-[#e9ebec] bg-white text-[#52545c]">
                    <span className="flex h-full w-[52px] items-center justify-center border-r border-[#e9ebec]"><RefreshCw size={25} /></span>
                    <span className="flex flex-1 justify-center"><ChevronDown size={16} strokeWidth={2.5} /></span>
                  </div>
                  <ToolBtn><Monitor size={25} /></ToolBtn>
                </div>
              </div>

              <div className="mt-[19px] flex h-[48px] gap-[6px]">
                <div className="flex w-[80px] items-center justify-center rounded-[3px] border border-[#e9ebec] bg-white text-[18px] font-medium text-[#3274d9]">应用名</div>
                <div className="flex w-[158px] items-center justify-center gap-[8px] rounded-[3px] border border-[#d8d9da] bg-white text-[20px]">
                  juno-admin
                  <ChevronDown size={12} strokeWidth={3} />
                </div>
              </div>

              <div className="mt-[12px] grid w-[3627px] grid-cols-[1806px_1806px] gap-x-[15px] gap-y-[14px]">
                <Panel title="CPU" thumb={247} className="h-[499px]">
                  <Flame rows={cpu} origin={42} scale={1.742} height={419} />
                </Panel>
                <Panel title="goroutine" thumb={247} className="h-[499px]">
                  <Flame rows={goroutine} origin={0} scale={1 / 22.24} height={419} />
                </Panel>
                <Panel title="Inuse Objects" thumb={122} className="h-[442px]">
                  <Flame rows={inuseObjects} origin={21} scale={0.891} height={363} />
                </Panel>
                <Panel title="Inuse Space" thumb={122} className="h-[442px]">
                  <Flame rows={inuseSpace} origin={22} scale={0.871} height={363} />
                </Panel>
                <Panel title="Alloc Objects" thumb={123} className="h-[442px]">
                  <Flame rows={allocObjects} origin={21} scale={0.891} height={363} />
                </Panel>
                <Panel title="Alloc Space" thumb={123} className="h-[442px]">
                  <Flame rows={allocSpace} origin={21} scale={0.8354} height={363} />
                  <svg width="30" height="28" viewBox="0 0 30 28" fill="none" stroke="#9a9a9a" strokeWidth="3" className="absolute bottom-[0px] right-[4px]">
                    <path d="M2 10V2h8M2 2l8 8M28 10V2h-8M28 2l-8 8M2 18v8h8M2 26l8-8M28 18v8h-8M28 26l-8-8" />
                  </svg>
                </Panel>
              </div>
            </div>
            <div className="h-[7px] shrink-0" />
          </section>
        </div>
      </main>
    </div>
  );
}
